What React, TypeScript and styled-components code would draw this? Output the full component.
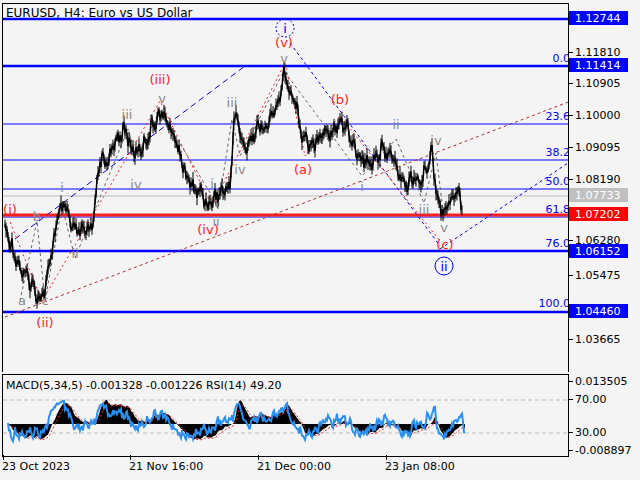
import React from "react";
import styled, { createGlobalStyle } from "styled-components";

const Global = createGlobalStyle`
  html, body { margin: 0; padding: 0; background: #f4f4f4; }
  body { font-family: "DejaVu Sans", "Liberation Sans", sans-serif; }
`;

const Frame = styled.div`
  width: 640px; height: 480px; background: #f4f4f4;
  display: grid;
  grid-template-columns: 569px 71px;
  grid-template-rows: 3px 369px 2px 83px 23px;
  font-family: "DejaVu Sans", sans-serif;
  font-size: 11px;
`;
const Pane = styled.div<{ $row: number; $open?: boolean }>`
  grid-column: 1; grid-row: ${p => p.$row};
  border: 1px solid #000; margin-left: 2px;
  border-bottom-style: ${p => (p.$open ? "none" : "solid")};
  overflow: hidden;
  svg { display: block; }
`;
const Axis = styled.div<{ $row: number }>`
  grid-column: 2; grid-row: ${p => p.$row}; position: relative;
`;
const Tick = styled.div<{ $y: number }>`
  position: absolute; left: 0; top: ${p => p.$y - 8}px;
  display: flex; align-items: center; height: 16px; color: #000;
  &::before { content: ""; width: 4px; height: 1px; background: #000; margin-right: 2px; }
`;
const Box = styled.div<{ $y: number; $bg: string }>`
  position: absolute; left: 0; top: ${p => p.$y - 7}px;
  display: flex; align-items: center; height: 14px; width: 53px;
  padding-left: 6px; background: ${p => p.$bg}; color: #fff;
`;
const DateRow = styled.div`
  grid-column: 1 / span 2; grid-row: 5;
  display: grid; grid-template-columns: 127px 128px 128px auto;
  padding-left: 2px; padding-top: 3px;
`;
const DateLabel = styled.div`
  position: relative; color: #000;
  &::before { content: ""; position: absolute; left: 1px; top: -5px; width: 1px; height: 5px; background: #000; }
`;

const way: [number, number][] = [
  [5, 228], [12, 245], [20, 268], [30, 280], [40, 298], [46, 285], [52, 250], [58, 215], [65, 205], [72, 228],
  [82, 232], [92, 225], [100, 160], [108, 160], [118, 135], [126, 130], [132, 150], [138, 150], [146, 140],
  [155, 120], [162, 112], [170, 125], [178, 145], [186, 175], [194, 188], [202, 192], [208, 205], [215, 195],
  [224, 190], [230, 185], [234, 120], [238, 117], [243, 148], [250, 140], [258, 125], [266, 128], [275, 108],
  [280, 100], [284, 70], [289, 90], [296, 100], [300, 130], [306, 138], [313, 145], [322, 130], [332, 130],
  [340, 118], [348, 130], [356, 150], [362, 160], [372, 160], [382, 150], [390, 152], [398, 170], [406, 185],
  [414, 175], [422, 182], [428, 160], [432, 152], [436, 190], [442, 210], [450, 200], [457, 190], [462, 205],
];
function rnd(i: number) { const s = Math.sin(i * 12.9898) * 43758.5453; return s - Math.floor(s); }
const pts: { x: number; y: number; hi: number; lo: number }[] = [];
for (let x = 5; x <= 462; x++) {
  let k = 0;
  while (k < way.length - 2 && way[k + 1][0] < x) k++;
  const [x0, y0] = way[k], [x1, y1] = way[k + 1];
  const t = Math.min(1, Math.max(0, (x - x0) / (x1 - x0 || 1)));
  const y = y0 + (y1 - y0) * t + (rnd(x) - 0.5) * 12 + Math.sin(x * 0.9) * 4;
  pts.push({ x, y, hi: y - 2 - rnd(x + 99) * 6, lo: y + 2 + rnd(x + 7) * 6 });
}
const pricePath = pts.map((p, i) => `${i ? "L" : "M"}${p.x},${p.y.toFixed(1)}`).join(" ");
const barsPath = pts.map(p => `M${p.x},${p.hi.toFixed(1)}V${p.lo.toFixed(1)}`).join(" ");

const Z = 49;
let ef = pts[0].y, es = pts[0].y, sig = 0;
const macd: number[] = [], sigs: number[] = [], rsi: number[] = [];
let up = 1, dn = 1;
pts.forEach((p, i) => {
  ef += (p.y - ef) * 0.3; es += (p.y - es) * 0.05;
  const m = (es - ef) * 0.55; macd.push(m);
  sig += (m - sig) * 0.3; sigs.push(sig);
  const d = i ? pts[i - 1].y - p.y : 0;
  up += (Math.max(d, 0) - up) / 8; dn += (Math.max(-d, 0) - dn) / 8;
  rsi.push(100 - 100 / (1 + up / (dn || 0.001)));
});
const clampY = (v: number) => Math.max(8, Math.min(78, v));
const macdPath = "M5," + Z + " " + macd.map((m, i) => `L${pts[i].x},${clampY(Z - m).toFixed(1)}`).join(" ") + ` L462,${Z} Z`;
const sigPath = sigs.map((s, i) => `${i ? "L" : "M"}${pts[i].x},${clampY(Z - s + 1).toFixed(1)}`).join(" ");
const rsiPath = rsi.map((r, i) => `${i ? "L" : "M"}${pts[i].x},${clampY(58 - (r - 30) * 0.5).toFixed(1)}`).join(" ");

const RED = "#ff2020", GRAY = "#8a8a8a", BLUE = "#0000ff";
type L = [string, number, number, string];
const labels: L[] = [
  ["(i)", 10, 213, RED], ["(ii)", 45, 326, RED], ["(iii)", 160, 83, RED], ["(iv)", 208, 233, RED], ["(v)", 284, 46, RED],
  ["(a)", 303, 173, RED], ["(b)", 340, 103, RED], ["(c)", 445, 248, RED],
  ["a", 22, 304, GRAY], ["b", 37, 220, GRAY], ["c", 45, 304, GRAY], ["i", 62, 191, GRAY], ["ii", 75, 257, GRAY],
  ["iii", 127, 118, GRAY], ["iv", 136, 188, GRAY], ["v", 162, 102, GRAY], ["iii", 232, 106, GRAY],
  ["iv", 240, 173, GRAY], ["i", 212, 187, GRAY], ["ii", 216, 225, GRAY], ["v", 284, 62, GRAY],
  ["ii", 396, 128, GRAY], ["iv", 436, 144, GRAY], ["i", 362, 190, GRAY], ["iii", 424, 213, GRAY], ["v", 444, 231, GRAY],
];

export default function App() {
  const py = [18, 65, 123, 159, 188, 216, 250, 311];
  return (
    <Frame>
      <Global />
      <Pane $row={2} $open>
        <svg width="568" height="369" viewBox="3 3 568 369">
          <g stroke={BLUE}>
            {py.map(y => <line key={y} x1={3} x2={571} y1={y} y2={y} strokeWidth={[18, 65, 250, 311].includes(y) ? 2.5 : 1.2} />)}
          </g>
          <line x1={3} x2={571} y1={195} y2={195} stroke="#bbb" />
          <line x1={3} x2={571} y1={214} y2={214} stroke={RED} strokeWidth={3} />
          <g fill={BLUE} fontSize="11" textAnchor="end">
            {[["0.0", 61], ["23.6", 119], ["38.2", 155], ["50.0", 184], ["61.8", 212], ["76.0", 246], ["100.0", 306]].map(([t, y]) =>
              <text key={t} x={570} y={y as number}>{t}</text>)}
          </g>
          <line x1={5} y1={316} x2={571} y2={100} stroke="#b03030" strokeDasharray="3 3" />
          <line x1={15} y1={238} x2={245} y2={65} stroke={BLUE} strokeDasharray="6 4" />
          <line x1={290} y1={42} x2={440} y2={245} stroke={BLUE} strokeDasharray="3 3" />
          <line x1={440} y1={248} x2={571} y2={160} stroke={BLUE} strokeDasharray="3 3" />
          <polyline points="10,221 42,300 160,100 212,205 285,62 305,155 340,115 440,240" fill="none" stroke={RED} strokeDasharray="2 3" />
          <polyline points="20,300 37,220 45,300 62,205 75,257 128,128 136,155 160,110 212,195 218,208 232,118 240,155 284,70 362,175 396,138 424,202 436,152 444,218" fill="none" stroke="#666" strokeDasharray="3 3" />
          <path d={barsPath} stroke="#000" strokeWidth={1} />
          <path d={pricePath} stroke="#000" strokeWidth={1.5} fill="none" />
          <g fontSize="13" textAnchor="middle" fontFamily="DejaVu Sans, sans-serif">
            {labels.map(([t, x, y, c], i) => <text key={i} x={x} y={y} fill={c}>{t}</text>)}
          </g>
          <circle cx={285} cy={27} r={9} fill="none" stroke={BLUE} strokeDasharray="2 2" />
          <text x={285} y={32} fill={BLUE} fontSize="13" textAnchor="middle">i</text>
          <circle cx={444} cy={265} r={9} fill="none" stroke={BLUE} />
          <text x={444} y={270} fill={BLUE} fontSize="13" textAnchor="middle">ii</text>
          <text x={6} y={16} fontSize="12" fill="#000">EURUSD, H4:  Euro vs US Dollar</text>
        </svg>
      </Pane>
      <Axis $row={2}>
        {[[52, "1.11810"], [83, "1.10905"], [115, "1.10000"], [147, "1.09095"], [179, "1.08190"], [240, "1.06280"], [275, "1.05475"], [339, "1.03665"]].map(([y, t]) =>
          <Tick key={t as string} $y={(y as number) - 3}>{t}</Tick>)}
        <Box $y={15} $bg="#0000ff">1.12744</Box>
        <Box $y={62} $bg="#0000ff">1.11414</Box>
        <Box $y={192} $bg="#c0c0c0">1.07733</Box>
        <Box $y={211} $bg="#ff0000">1.07202</Box>
        <Box $y={248} $bg="#0000ff">1.06152</Box>
        <Box $y={308} $bg="#0000ff">1.04460</Box>
      </Axis>
      <Pane $row={4}>
        <svg width="568" height="83">
          <line x1={0} x2={568} y1={25} y2={25} stroke="#bbb" strokeDasharray="4 3" />
          <line x1={0} x2={568} y1={58} y2={58} stroke="#bbb" strokeDasharray="4 3" />
          <path d={macdPath} fill="#000" />
          <path d={sigPath} fill="none" stroke={RED} strokeDasharray="2 2" />
          <path d={rsiPath} fill="none" stroke="#2a8fef" strokeWidth={2} />
          <text x={3} y={14} fontSize="11" fill="#000">MACD(5,34,5) -0.001328 -0.001226 RSI(14) 49.20</text>
        </svg>
      </Pane>
      <Axis $row={4}>
        <Tick $y={7}>0.013505</Tick>
        <Tick $y={25}>70.00</Tick>
        <Tick $y={58}>30.00</Tick>
        <Tick $y={76}>-0.008897</Tick>
      </Axis>
      <DateRow>
        <DateLabel>23 Oct 2023</DateLabel>
        <DateLabel>21 Nov 16:00</DateLabel>
        <DateLabel>21 Dec 00:00</DateLabel>
        <DateLabel>23 Jan 08:00</DateLabel>
      </DateRow>
    </Frame>
  );
}
